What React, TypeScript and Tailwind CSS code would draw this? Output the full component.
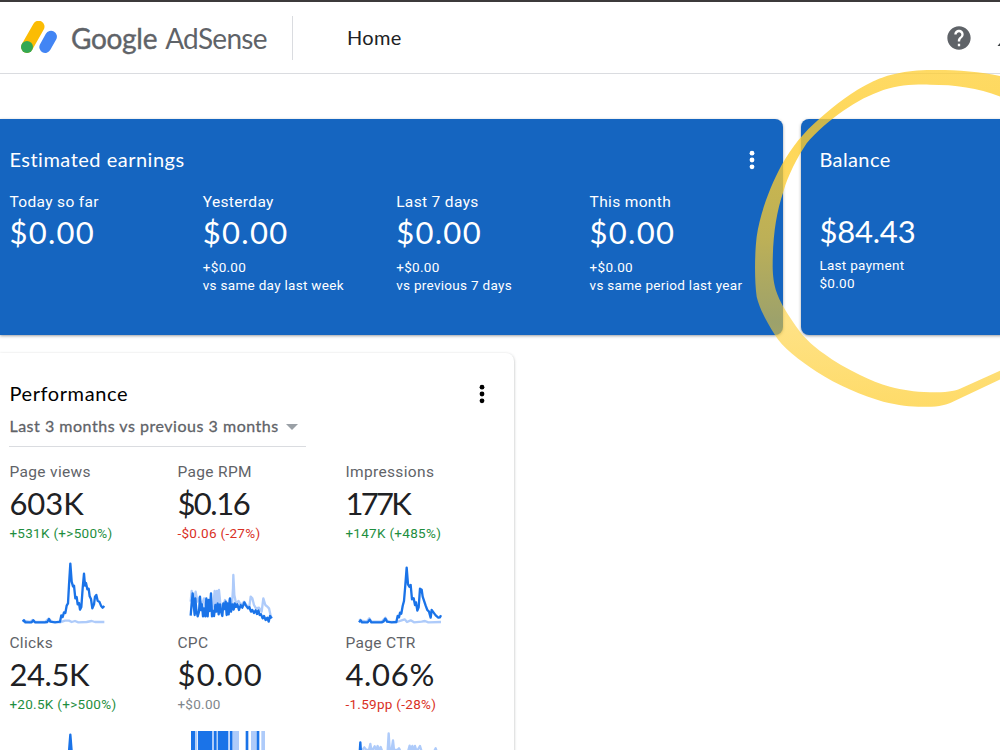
import React from 'react';
import { clsx } from 'clsx';

interface Earning {
  label: string;
  value: string;
  delta?: string;
  note?: string;
}

interface Line {
  color: string;
  points: string;
}

interface Metric {
  label: string;
  value: string;
  valueClass: string;
  delta: string;
  deltaClass: string;
  viewBox: string;
  lines: Line[];
}

const BLUE = '#1a73e8';
const PALE = '#aecbfa';

const EARNINGS: Earning[] = [
  { label: 'Today so far', value: '$0.00' },
  { label: 'Yesterday', value: '$0.00', delta: '+$0.00', note: 'vs same day last week' },
  { label: 'Last 7 days', value: '$0.00', delta: '+$0.00', note: 'vs previous 7 days' },
  { label: 'This month', value: '$0.00', delta: '+$0.00', note: 'vs same period last year' },
];

const METRICS: Metric[] = [
  {
    label: 'Page views',
    value: '603K',
    valueClass: 'tracking-normal',
    delta: '+531K (+>500%)',
    deltaClass: 'text-[#1e8e3e]',
    viewBox: '30 0 330 225',
    lines: [
      { color: PALE, points: '68,194 75,198 90,201 98,195 104,201 135,201 146,191 155,200 180,202 195,197 207,197 215,201 225,198 235,202 260,201 275,198 285,201 313,201' },
      { color: BLUE, points: '68,200 72,196 76,202 95,202 100,196 105,202 135,202 142,201 147,192 151,200 165,202 180,200 184,181 188,186 192,172 196,174 200,152 204,145 207,90 211,26 215,80 219,94 222,92 226,130 230,126 233,148 237,144 240,164 244,156 248,100 252,56 255,92 258,84 262,103 266,101 269,124 273,132 277,160 282,148 285,125 289,120 293,137 298,140 303,152 308,158 313,153' },
    ],
  },
  {
    label: 'Page RPM',
    value: '$0.16',
    valueClass: 'tracking-[-1.5px]',
    delta: '-$0.06 (-27%)',
    deltaClass: 'text-[#d93025]',
    viewBox: '54 0 330 225',
    lines: [
      { color: PALE, points: '92,140 95,108 100,145 107,110 112,140 118,128 124,155 132,130 138,160 145,145 155,165 160,150 164,108 167,145 171,108 174,140 177,105 181,145 187,160 195,135 202,155 209,132 216,148 219,100 220,60 223,120 228,145 236,138 243,150 252,140 260,152 268,155 272,125 277,130 282,150 288,160 297,158 305,170 310,130 316,150 322,155 327,160 331,178 335,190' },
      { color: BLUE, points: '92,182 95,145 98,115 101,150 104,180 106,130 109,165 113,184 117,170 120,125 123,165 126,148 129,184 132,160 136,184 139,130 143,184 146,135 149,168 153,115 156,184 159,168 162,183 166,150 169,170 173,145 176,178 180,148 183,170 187,183 190,145 193,162 197,140 200,180 203,145 206,178 210,130 213,170 217,148 221,164 224,145 228,156 232,148 237,165 242,150 247,158 253,142 258,152 264,160 268,156 273,170 277,165 282,174 287,166 291,177 295,166 299,180 303,178 308,190 312,183 317,195 322,188 326,200 330,183 335,190' },
    ],
  },
  {
    label: 'Impressions',
    value: '177K',
    valueClass: 'tracking-[-2.7px]',
    delta: '+147K (+485%)',
    deltaClass: 'text-[#1e8e3e]',
    viewBox: '48 0 330 225',
    lines: [
      { color: PALE, points: '88,192 93,197 110,200 118,190 124,200 155,200 166,188 173,200 200,201 215,196 224,193 231,201 242,196 252,202 275,200 285,198 295,202 333,201' },
      { color: BLUE, points: '87,202 92,196 96,202 113,202 119,194 124,202 155,202 161,199 166,191 171,200 185,202 199,201 203,183 207,187 210,173 214,176 218,153 222,138 226,90 230,38 234,88 238,95 242,90 246,133 251,130 255,150 258,142 262,167 266,157 270,101 275,104 278,125 283,140 287,152 292,165 297,170 302,188 305,165 311,173 317,181 325,188 330,187 333,181' },
    ],
  },
  {
    label: 'Clicks',
    value: '24.5K',
    valueClass: 'tracking-[-0.4px]',
    delta: '+20.5K (+>500%)',
    deltaClass: 'text-[#1e8e3e]',
    viewBox: '30 513 330 225',
    lines: [{ color: BLUE, points: '184,694 196,680 203,640 207,590 211,539 215,590 222,640 240,680 252,630 270,680' }],
  },
  {
    label: 'CPC',
    value: '$0.00',
    valueClass: 'tracking-[1.3px]',
    delta: '+$0.00',
    deltaClass: 'text-[#80868b]',
    viewBox: '54 513 330 225',
    lines: [],
  },
  {
    label: 'Page CTR',
    value: '4.06%',
    valueClass: 'tracking-[0.7px]',
    delta: '-1.59pp (-28%)',
    deltaClass: 'text-[#d93025]',
    viewBox: '48 513 330 225',
    lines: [
      { color: PALE, points: '97,585 103,577 109,585 117,585 121,567 125,590 134,574 138,586 143,573 147,588 152,576 157,590 168,590 173,586 176,535 179,584 184,590 189,556 192,584 202,585 207,580 212,590 234,590 239,572 243,588 247,573 251,589 255,573 260,590 270,573 275,590 312,590 317,580 321,592' },
      { color: BLUE, points: '88,610 91,562 94,610 120,600' },
    ],
  },
];

// CPC swings between zero and one cent, so it reads as solid bands
const CPC_BANDS = [
  { x: 93, w: 13, color: BLUE },
  { x: 107, w: 5, color: PALE },
  { x: 114, w: 43, color: BLUE },
  { x: 157, w: 5, color: PALE },
  { x: 162, w: 8, color: BLUE },
  { x: 173, w: 31, color: BLUE },
  { x: 204, w: 5, color: PALE },
  { x: 210, w: 8, color: BLUE },
  { x: 218, w: 19, color: PALE },
  { x: 257, w: 8, color: BLUE },
  { x: 273, w: 17, color: PALE },
  { x: 290, w: 8, color: BLUE },
  { x: 304, w: 11, color: PALE },
];

function AdSenseLogo() {
  return (
    <svg width="38" height="34" viewBox="0 0 38 34" className="shrink-0">
      <path d="M7 26 L18.6 5.6" stroke="#fbbc04" strokeWidth="11.8" strokeLinecap="round" />
      <path d="M25.2 26 L31 15.6" stroke="#4285f4" strokeWidth="11.8" strokeLinecap="round" />
      <circle cx="7" cy="26" r="6" fill="#34a853" />
    </svg>
  );
}

function MoreIcon() {
  return (
    <svg width="6" height="20" viewBox="0 0 6 20" fill="currentColor">
      <circle cx="3" cy="3.2" r="2.4" />
      <circle cx="3" cy="10" r="2.4" />
      <circle cx="3" cy="16.8" r="2.4" />
    </svg>
  );
}

function HelpIcon() {
  return (
    <svg width="28" height="28" viewBox="0 0 24 24" fill="#5f6368">
      <path d="M12 2C6.48 2 2 6.48 2 12s4.48 10 10 10 10-4.48 10-10S17.52 2 12 2zm1 17h-2v-2h2v2zm2.07-7.75l-.9.92C13.45 12.9 13 13.5 13 15h-2v-.5c0-1.1.45-2.1 1.17-2.83l1.24-1.26c.37-.36.59-.86.59-1.41 0-1.1-.9-2-2-2s-2 .9-2 2H8c0-2.21 1.79-4 4-4s4 1.79 4 4c0 .88-.36 1.68-.93 2.25z" />
    </svg>
  );
}

function Sparkline({ metric }: { metric: Metric }) {
  return (
    <svg width="110" height="75" viewBox={metric.viewBox} fill="none" className="ml-px block">
      {metric.label === 'CPC' &&
        CPC_BANDS.map((b) => <rect key={b.x} x={b.x} y="528" width={b.w} height="170" fill={b.color} />)}
      {metric.lines.map((l, i) => (
        <polyline key={i} points={l.points} stroke={l.color} strokeWidth="7" strokeLinejoin="round" />
      ))}
    </svg>
  );
}

function Marker() {
  return (
    <svg width="260" height="360" viewBox="0 0 780 1080" className="pointer-events-none absolute left-[740px] top-[60px]">
      <defs>
        <linearGradient id="ink" x1="0" y1="30" x2="0" y2="1040" gradientUnits="userSpaceOnUse">
          <stop offset="0" stopColor="#fecd2e" stopOpacity="0.74" />
          <stop offset="0.2" stopColor="#fecd2e" stopOpacity="0.8" />
          <stop offset="0.5" stopColor="#fecd2e" stopOpacity="0.72" />
          <stop offset="0.75" stopColor="#fecd2e" stopOpacity="0.58" />
          <stop offset="1" stopColor="#fecd2e" stopOpacity="0.72" />
        </linearGradient>
      </defs>
      <path
        fill="url(#ink)"
        d="M790 50 C720 34 640 28 560 30 C480 32 430 50 400 64 C330 98 290 132 240 175 C190 218 155 262 125 315 C90 380 60 460 50 530 C44 580 43 660 50 710 C58 745 80 785 105 825 C125 860 180 903 230 935 C290 974 370 1008 430 1025 C480 1037 520 1041 560 1040 C600 1040 620 1034 645 1022 L790 954 L790 928 L660 986 C640 994 620 997 570 997 C520 995 490 990 450 980 C420 973 390 960 360 945 C320 926 285 906 250 880 C220 858 200 840 180 815 C160 788 145 765 130 740 C112 705 99 680 98 620 C98 530 108 460 130 395 C145 345 170 295 200 250 C225 218 275 176 310 152 C350 124 390 104 430 90 C480 75 520 73 570 74 C650 74 720 84 790 114 Z"
      />
    </svg>
  );
}

function EarningColumn({ item }: { item: Earning }) {
  return (
    <div className="w-[193.4px] whitespace-nowrap">
      <div className="text-[15.5px] leading-5 tracking-[0.35px]">{item.label}</div>
      <div className="mt-[2.5px] font-[Lato,sans-serif] text-[31px] leading-9 tracking-[1.3px]">{item.value}</div>
      {item.delta && (
        <div className="mt-[7.5px] text-[13.5px] leading-[18px] tracking-[0.3px]">
          {item.delta}
          <br />
          {item.note}
        </div>
      )}
    </div>
  );
}

export default function App() {
  return (
    <div className="relative flex h-[750px] w-[1000px] flex-col overflow-hidden bg-white font-[Roboto,sans-serif] text-[#202124]">
      <div className="h-[2px] shrink-0 bg-[#3c3a3b]" />
      <header className="flex h-[72px] shrink-0 items-center border-b border-[#dadce0] pl-5">
        <AdSenseLogo />
        <div className="ml-[13px] flex w-[221px] items-center gap-2 whitespace-nowrap font-[Lato,sans-serif] text-[28px] leading-9 text-[#5f6368]">
          <span className="tracking-[-0.3px] [-webkit-text-stroke:0.4px_#5f6368]">Google</span>
          <span className="tracking-[-0.7px]">AdSense</span>
        </div>
        <div className="h-11 w-px bg-[#dadce0]" />
        <div className="ml-[54px] pb-0.5 font-[Lato,sans-serif] text-xl tracking-[0.3px]">Home</div>
        <div className="ml-auto flex items-center">
          <HelpIcon />
          <svg width="27" height="28" viewBox="0 0 27 28" fill="#3c4043">
            <path d="M24.5 22 L27 19 V22 Z" />
          </svg>
        </div>
      </header>

      <main className="flex grow flex-col pt-[45px]">
        <div className="flex h-[216px] shrink-0 gap-[18px] text-white">
          <section className="w-[783.4px] shrink-0 rounded-r-lg bg-[#1565c0] pl-[9.4px] shadow-[0_1px_3px_rgba(60,64,67,0.5)]">
            <div className="mt-[28px] flex items-center justify-between pr-[28px]">
              <h2 className="pb-0.5 font-[Lato,sans-serif] text-xl leading-6 tracking-[0.5px]">Estimated earnings</h2>
              <MoreIcon />
            </div>
            <div className="mt-[18.5px] flex">
              {EARNINGS.map((e) => (
                <EarningColumn key={e.label} item={e} />
              ))}
            </div>
          </section>
          <section className="w-[300px] shrink-0 rounded-lg bg-[#1565c0] pl-[18px] shadow-[0_1px_3px_rgba(60,64,67,0.5)]">
            <h2 className="mt-[28px] font-[Lato,sans-serif] text-xl leading-6 tracking-[0.4px]">Balance</h2>
            <div className="mt-[41.5px] font-[Lato,sans-serif] text-[31px] leading-9 tracking-[-0.2px]">$84.43</div>
            <div className="mt-[7px] text-[13.5px] leading-[18px] tracking-[0.3px]">
              Last payment
              <br />
              $0.00
            </div>
          </section>
        </div>

        <section className="mt-[18px] w-[514px] grow rounded-tr-lg pl-[9.4px] shadow-[0_1px_3px_rgba(60,64,67,0.4)]">
          <div className="mt-[28px] flex items-center justify-between pr-[29px] text-black">
            <h2 className="pb-0.5 font-[Lato,sans-serif] text-xl leading-6 tracking-[0.6px]">Performance</h2>
            <MoreIcon />
          </div>
          <div className="mt-[9px] flex h-[31px] w-[296.6px] items-start border-b border-[#dadce0] text-[#5f6368]">
            <span className="whitespace-nowrap font-[Lato,sans-serif] text-base leading-5 tracking-[0.52px] [-webkit-text-stroke:0.3px_#5f6368]">
              Last 3 months vs previous 3 months
            </span>
            <svg width="12" height="6" viewBox="0 0 12 6" fill="#9aa0a6" className="ml-auto mr-2 mt-2">
              <path d="M0 0 H12 L6 6 Z" />
            </svg>
          </div>
          <div className="mt-[15px] grid grid-cols-[168px_168px_168px]">
            {METRICS.map((m) => (
              <div key={m.label} className="h-[171px] whitespace-nowrap">
                <div className="text-[15.5px] leading-5 tracking-[0.35px] text-[#5f6368]">{m.label}</div>
                <div className={clsx('mt-[3px] font-[Lato,sans-serif] text-[31px] leading-9', m.valueClass)}>{m.value}</div>
                <div className={clsx('mb-[13px] mt-[3px] text-[13.5px] leading-[18px] tracking-[0.3px]', m.deltaClass)}>
                  {m.delta}
                </div>
                <Sparkline metric={m} />
              </div>
            ))}
          </div>
        </section>
      </main>
      <Marker />
    </div>
  );
}
